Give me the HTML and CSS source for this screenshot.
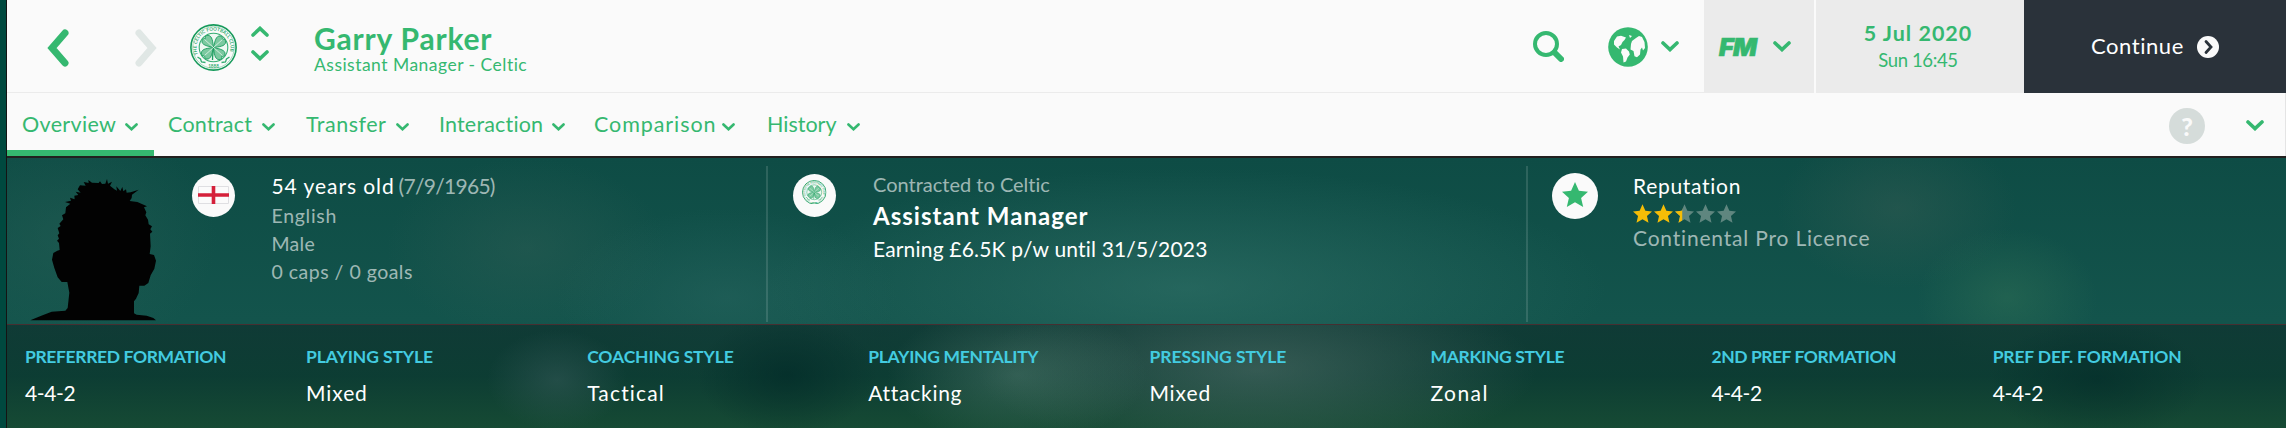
FILE: index.html
```
<!DOCTYPE html>
<html lang="en">
<head>
<meta charset="utf-8">
<title>Garry Parker</title>
<link rel="stylesheet" href="styles.css">
</head>
<body>
<svg class="defs" width="0" height="0">
  <defs>
    <symbol id="chev" viewBox="0 0 18 11"><path d="M2 2l7 6.600L16 2" fill="none" stroke="currentColor" stroke-width="3.600" stroke-linecap="round" stroke-linejoin="miter"/></symbol>
    <symbol id="star" viewBox="0 0 26 25"><path d="M13 0l3.900 8.800 9.100.9-6.900 6.200 2.100 9.100-8.200-4.800L4.800 25l2.100-9.100L0 9.700l9.100-.9z" fill="currentColor"/></symbol>
    <symbol id="crest" viewBox="0 0 47 47">
      <circle cx="23.500" cy="23.500" r="22.600" fill="#fafafa" stroke="#179a5b" stroke-width="1.600"/>
      <circle cx="23.500" cy="23.500" r="20.800" fill="none" stroke="#7fcaa3" stroke-width=".7"/>
      <circle cx="23.500" cy="23.500" r="14.300" fill="#eef8f2" stroke="#35ae72" stroke-width="1.100"/>
      <path id="ring" d="M8 30.500A17 17 0 1 1 39 30.500" fill="none"/>
      <text class="crest-text"><textPath href="#ring" textLength="64">THE CELTIC FOOTBALL CLUB</textPath></text>
      <text class="crest-text" x="23.500" y="43.500" text-anchor="middle">1888</text>
      <path d="M7.500 33l3 2 1 3 4 .5M39.500 33l-3 2-1 3-4 .5" fill="none" stroke="#35ae72" stroke-width="1.300"/>
      <g fill="#7cc9a0" stroke="#23a164" stroke-width="1">
        <path id="leaf" d="M23.500 23.500C17 22 11.500 21 12 16.800c.4-2.300 2.400-2.300 3.300-2.100-.5-2.200.8-3.600 2.800-3.400C22.500 12 22.600 17.500 23.500 23.500z"/>
        <use href="#leaf" transform="rotate(90 23.500 23.500)"/>
        <use href="#leaf" transform="rotate(180 23.500 23.500)"/>
        <use href="#leaf" transform="rotate(270 23.500 23.500)"/>
      </g>
      <path d="M14.500 15.500l18 16M32.500 15.500l-18 16" stroke="#e6f5ec" stroke-width=".8"/>
      <path d="M23.500 24c-.5 5-1 8-1 12" fill="none" stroke="#1d9d60" stroke-width="1.300"/>
    </symbol>
  </defs>
</svg>
<div class="app">
  <div class="rail"></div>
  <main class="main">
    <header class="header">
      <svg class="back" viewBox="0 0 22 38"><path d="M18 4L5 19l13 15" fill="none" stroke="currentColor" stroke-width="7" stroke-linecap="round"/></svg>
      <svg class="forward" viewBox="0 0 22 38"><path d="M4 4l13 15L4 34" fill="none" stroke="currentColor" stroke-width="7" stroke-linecap="round"/></svg>
      <svg class="crest"><use href="#crest"/></svg>
      <div class="stepper"><svg class="chev up"><use href="#chev"/></svg><svg class="chev"><use href="#chev"/></svg></div>
      <div class="title">
        <div class="name">Garry Parker</div>
        <div class="role">Assistant Manager - Celtic</div>
      </div>
      <svg class="search" viewBox="0 0 31 31"><circle cx="13" cy="13" r="11" fill="none" stroke="currentColor" stroke-width="4"/><path d="M21.500 21.500l6.500 6.500" stroke="currentColor" stroke-width="6" stroke-linecap="round"/></svg>
      <svg class="globe" viewBox="0 0 40 40"><circle cx="20" cy="20" r="19.800" fill="currentColor"/><path d="M6 14l3-4.500 4-.8 5 1.800-1.500 2.500-2 2-1.500 3-2.500 1.500 1.500 3-3-2-3-3zM21 8l3 1-2 2zM14 22l4-.5 3 3 .8 3-2.300 3-1.500 4-2.500 1-.5-6-2-4zM23 17l1-3 4-3 3-2 3 1 2.500 5 .5 6-2 2.500-1-3-1.500 2-.5 5-3 2.800-2.500-1-1-5.300-3-1.500z" fill="#fafafa"/></svg>
      <svg class="chev globe-chev"><use href="#chev"/></svg>
      <div class="fm"><span class="fm-logo">FM</span><svg class="chev"><use href="#chev"/></svg></div>
      <div class="date"><div class="day">5 Jul 2020</div><div class="time">Sun 16:45</div></div>
      <div class="continue"><span>Continue</span><svg viewBox="0 0 22 22"><circle cx="11" cy="11" r="11" fill="#fafafa"/><path d="M9 5.500l5 5.500-5 5.500" fill="none" stroke="#2a323a" stroke-width="2.800" stroke-linecap="round"/></svg></div>
    </header>
    <nav class="nav">
      <a class="tab active t1"><span>Overview</span><svg><use href="#chev"/></svg></a>
      <a class="tab t2"><span>Contract</span><svg><use href="#chev"/></svg></a>
      <a class="tab t3"><span>Transfer</span><svg><use href="#chev"/></svg></a>
      <a class="tab t4"><span>Interaction</span><svg><use href="#chev"/></svg></a>
      <a class="tab t5"><span>Comparison</span><svg><use href="#chev"/></svg></a>
      <a class="tab t6"><span>History</span><svg><use href="#chev"/></svg></a>
      <span class="help">?</span>
      <svg class="chev nav-chev"><use href="#chev"/></svg>
    </nav>
    <div class="panel">
      <section class="info">
        <div class="col person">
          <svg class="portrait" viewBox="24 40 390 428"><path d="M31 467L62 454L95 441L136 438L143 430L148 384L142 352L125 352L113 338L103 310L96 285L100 265L112 258L119 256L117 235L111 228L117 222L113 212L118 206L113 190L122 184L118 177L130 164L126 152L136 146L138 128L151 117L135 112L153 108L150 99L164 104L163 93L175 91L167 81L182 84L173 74L180 62L197 63L191 52L206 55L205 46L216 54L236 55L240 50L246 58L256 57L261 43L264 57L276 51L270 63L283 74L291 78L289 65L301 79L307 67L310 80L318 74L320 84L332 83L356 75L336 90L335 100L329 109L352 112L381 125L372 128L379 143L376 152L384 165L386 179L396 185L391 194L397 201L390 207L392 245L389 268L402 271L408 288L403 312L392 332L385 355L373 363L358 363L356 385L348 402L342 410L342 446L350 450L380 453L400 460L408 467Z" fill="#020202"/></svg>
          <span class="disc"><svg class="flag" viewBox="0 0 31 18"><path d="M0 0h31v18H0z" fill="#fbfbfb"/><path d="M.5.500h30v17H.500z" fill="none" stroke="#dfdfe2"/><path d="M0 9h31M15.500 0v18" stroke="#d5203a" stroke-width="3.600"/></svg></span>
          <div class="lines">
            <div class="age"><span class="years">54 years old</span><span class="dim dob">(7/9/1965)</span></div>
            <div class="fact dim nation">English</div>
            <div class="fact dim">Male</div>
            <div class="fact dim caps">0 caps / 0 goals</div>
          </div>
        </div>
        <div class="col contract">
          <span class="disc"><svg class="mini"><use href="#crest"/></svg></span>
          <div class="lines">
            <div class="club dim">Contracted to Celtic</div>
            <div class="job">Assistant Manager</div>
            <div class="wage">Earning £6.5K p/w until 31/5/2023</div>
          </div>
        </div>
        <div class="col rep">
          <span class="disc big"><svg class="bigstar"><use href="#star"/></svg></span>
          <div class="lines">
            <div class="reputation">Reputation</div>
            <div class="stars">
              <svg class="on"><use href="#star"/></svg><svg class="on"><use href="#star"/></svg><span class="half"><svg><use href="#star"/></svg><svg class="on cut"><use href="#star"/></svg></span><svg><use href="#star"/></svg><svg><use href="#star"/></svg>
            </div>
            <div class="lic dim">Continental Pro Licence</div>
          </div>
        </div>
      </section>
      <section class="stats">
        <div class="stat formation"><h3>PREFERRED FORMATION</h3><p>4-4-2</p></div>
        <div class="stat playing"><h3>PLAYING STYLE</h3><p>Mixed</p></div>
        <div class="stat coaching"><h3>COACHING STYLE</h3><p>Tactical</p></div>
        <div class="stat mentality"><h3>PLAYING MENTALITY</h3><p>Attacking</p></div>
        <div class="stat pressing"><h3>PRESSING STYLE</h3><p>Mixed</p></div>
        <div class="stat marking"><h3>MARKING STYLE</h3><p>Zonal</p></div>
        <div class="stat second"><h3>2ND PREF FORMATION</h3><p>4-4-2</p></div>
        <div class="stat defensive"><h3>PREF DEF. FORMATION</h3><p>4-4-2</p></div>
      </section>
    </div>
  </main>
</div>
</body>
</html>
```
FILE: styles.css
```
* { box-sizing: border-box; }
body { margin: 0; font-family: Lato, "Open Sans", sans-serif; font-variant-ligatures: none; overflow: hidden; }
svg { display: block; flex: none; color: inherit; }
.defs { position: absolute; }
.crest-text { font: 700 4.6px Lato, sans-serif; fill: #35ae72; letter-spacing: 0; }
.app { display: flex; width: 2286px; height: 428px; white-space: nowrap; }
.rail { width: 7px; background: #00493f; border-right: 1px solid #141414; flex: none; }
.main { flex: 1; display: flex; flex-direction: column; color: #35b870; min-width: 0; }

.header { height: 93px; background: #fafafa; border-bottom: 1px solid #ebebeb; display: flex; align-items: flex-start; flex: none; }
.chev { width: 18px; height: 11px; }
.back, .forward { width: 22px; height: 38px; margin-top: 29px; }
.back { margin-left: 40px; }
.forward { margin-left: 66px; color: #e0e7e5; }
.crest { width: 47px; height: 47px; margin: 24px 0 0 33px; }
.stepper { margin: 26px 0 0 14px; display: flex; flex-direction: column; gap: 13px; }
.up { transform: rotate(180deg); }
.title { margin: 19px 0 0 45px; flex: 1; }
.name { font-size: 30px; font-weight: 700; line-height: 38px; letter-spacing: .8px; }
.role { font-size: 17.5px; line-height: 16px; letter-spacing: .48px; }
.search { width: 31px; height: 31px; margin-top: 31px; }
.globe { width: 40px; height: 40px; margin: 27px 0 0 44px; }
.globe-chev { margin: 41px 0 0 13px; }
.fm { width: 110px; height: 93px; margin-left: 25px; background: #ebebeb; display: flex; padding: 32px 0 0 15px; }
.fm .chev { margin: 9px 0 0 15px; }
.fm-logo { font: italic 900 25px/30px Inter, sans-serif; width: 39px; -webkit-text-stroke: .7px currentColor; letter-spacing: -.5px; }
.date { width: 210px; height: 93px; background: #ebebeb; border-left: 2px solid #fafafa; text-align: center; padding: 19px 4px 0 0; }
.day { font-size: 21.5px; font-weight: 700; line-height: 28px; letter-spacing: 1px; }
.time { font-size: 18.5px; line-height: 26px; letter-spacing: -.38px; }
.continue { width: 262px; height: 93px; background: #2a323a; color: #fff; display: flex; font-size: 22px; line-height: 92px; padding-left: 67px; letter-spacing: .55px; }
.continue span { width: 106px; }
.continue svg { width: 22px; height: 22px; margin-top: 36px; }

.nav { height: 63px; background: #fafafa; display: flex; align-items: flex-start; font-size: 21.5px; line-height: 62px; flex: none; border-right: 1px solid #e4e4e4; }
.tab { display: flex; height: 63px; padding-left: 15px; }
.tab svg { width: 13px; height: 8px; margin-top: 30px; }
.active { border-bottom: 6px solid #35b870; }
.t1 { width: 147px; letter-spacing: .34px; }
.t1 span { width: 103px; }
.t2 { width: 137px; padding-left: 14px; letter-spacing: .26px; }
.t2 span { width: 94px; }
.t3 { width: 134px; letter-spacing: .5px; }
.t3 span { width: 90px; }
.t4 { width: 155px; padding-left: 14px; letter-spacing: .17px; }
.t4 span { width: 113px; }
.t5 { width: 172px; padding-left: 14px; letter-spacing: .92px; }
.t5 span { width: 128px; }
.t6 { flex: 1; }
.t6 span { width: 80px; }
.help { width: 36px; height: 36px; margin: 15px 41px 0 0; border-radius: 50%; background: #d5dcda; color: #fafafa; font: 900 25px/36px Lato, sans-serif; text-align: center; }
.nav-chev { margin: 27px 21px 0 0; }

.panel { flex: 1; border-top: 2px solid #22201f; color: #fff;
  background:
    radial-gradient(ellipse 90px 70px at 2000px 140px, rgba(60,125,90,.35), transparent),
    radial-gradient(ellipse 420px 120px at 1180px 130px, rgba(60,125,115,.45), transparent),
    radial-gradient(ellipse 170px 90px at 720px 140px, rgba(50,110,105,.35), transparent),
    radial-gradient(ellipse 120px 80px at 1890px 50px, rgba(60,95,85,.4), transparent),
    radial-gradient(ellipse 140px 90px at 520px 90px, rgba(50,95,85,.4), transparent),
    radial-gradient(ellipse 150px 120px at 60px 80px, rgba(40,95,85,.45), transparent),
    linear-gradient(#0e4c45, #13544c 60%, #164f47); }
.info { display: flex; height: 167px; padding-top: 8px; border-bottom: 1px solid #462f31; }
.col { height: 156px; display: flex; flex: none; align-items: flex-start; }
.contract, .rep { border-left: 2px solid rgba(255,255,255,.13); }
.person { width: 759px; padding-left: 21px; }
.contract { width: 760px; padding-left: 25px; }
.rep { flex: 1; padding-left: 24px; }
.portrait { width: 130px; height: 142.7px; margin-top: 12px; }
.disc { width: 43px; height: 43px; border-radius: 50%; background: #fafafa; margin-top: 8px; flex: none; display: flex; justify-content: center; align-items: flex-start; }
.person .disc { margin-left: 33.5px; }
.flag { width: 31px; height: 18px; margin-top: 12px; }
.mini { width: 24.5px; height: 24.5px; margin-top: 5.5px; }
.big { width: 46px; height: 46px; margin-top: 7px; color: #35b870; }
.bigstar { width: 26px; height: 25px; margin-top: 9px; }
.lines { margin: 6px 0 0 37px; }
.rep .lines { margin-left: 35px; }
.dim { color: rgba(255,255,255,.6); }
.age { display: flex; font-size: 21px; line-height: 28px; margin-bottom: 2px; }
.years { width: 127px; letter-spacing: .94px; }
.dob { letter-spacing: -.7px; }
.fact { font-size: 19.5px; line-height: 28px; letter-spacing: .3px; }
.nation { letter-spacing: .7px; }
.caps { letter-spacing: .49px; }
.club { font-size: 20px; line-height: 25px; }
.job { font-size: 24px; font-weight: 700; line-height: 38px; letter-spacing: 1.02px; }
.wage { font-size: 21px; line-height: 28px; letter-spacing: .18px; }
.reputation { font-size: 21px; line-height: 28px; letter-spacing: .7px; }
.stars { display: flex; gap: 2px; color: #5f867f; margin-top: 4px; height: 19px; }
.stars svg { width: 19px; height: 19px; }
.stars .on { color: #f5bd07; }
.half { position: relative; width: 19px; }
.stars .cut { position: absolute; left: 0; top: 0; clip-path: inset(0 62% 0 0); }
.lic { font-size: 21px; line-height: 30px; letter-spacing: .81px; }

.stats { display: grid; grid-template-columns: repeat(8, 281.1px); height: 103px; padding: 18px 0 0 18px;
  background:
    radial-gradient(ellipse 130px 70px at 1010px 50px, rgba(110,150,135,.35), transparent),
    radial-gradient(ellipse 280px 90px at 1250px 45px, rgba(100,125,120,.45), transparent),
    radial-gradient(ellipse 90px 60px at 780px 50px, rgba(0,40,38,.6), transparent),
    radial-gradient(ellipse 110px 60px at 2090px 55px, rgba(0,40,38,.5), transparent),
    radial-gradient(ellipse 70px 50px at 550px 55px, rgba(60,95,95,.45), transparent),
    linear-gradient(rgba(14,50,46,.75), rgba(10,54,44,.75) 50%, rgba(22,74,50,.9)); }
.stat h3 { margin: 0; font-size: 17.5px; font-weight: 700; line-height: 28px; color: #43cbe0; }
.stat p { margin: 0; font-size: 21px; line-height: 44px; letter-spacing: -.37px; }
.formation h3 { letter-spacing: -.37px; }
.playing h3 { letter-spacing: -.11px; }
.coaching h3 { letter-spacing: -.12px; }
.mentality h3 { letter-spacing: -.31px; }
.pressing h3 { letter-spacing: -.04px; }
.marking h3 { letter-spacing: -.34px; }
.second h3 { letter-spacing: -.47px; }
.defensive h3 { letter-spacing: -.16px; }
.playing p, .pressing p { letter-spacing: .89px; }
.coaching p { letter-spacing: 1.16px; }
.mentality p { letter-spacing: .72px; }
.marking p { letter-spacing: 1.45px; }
```
